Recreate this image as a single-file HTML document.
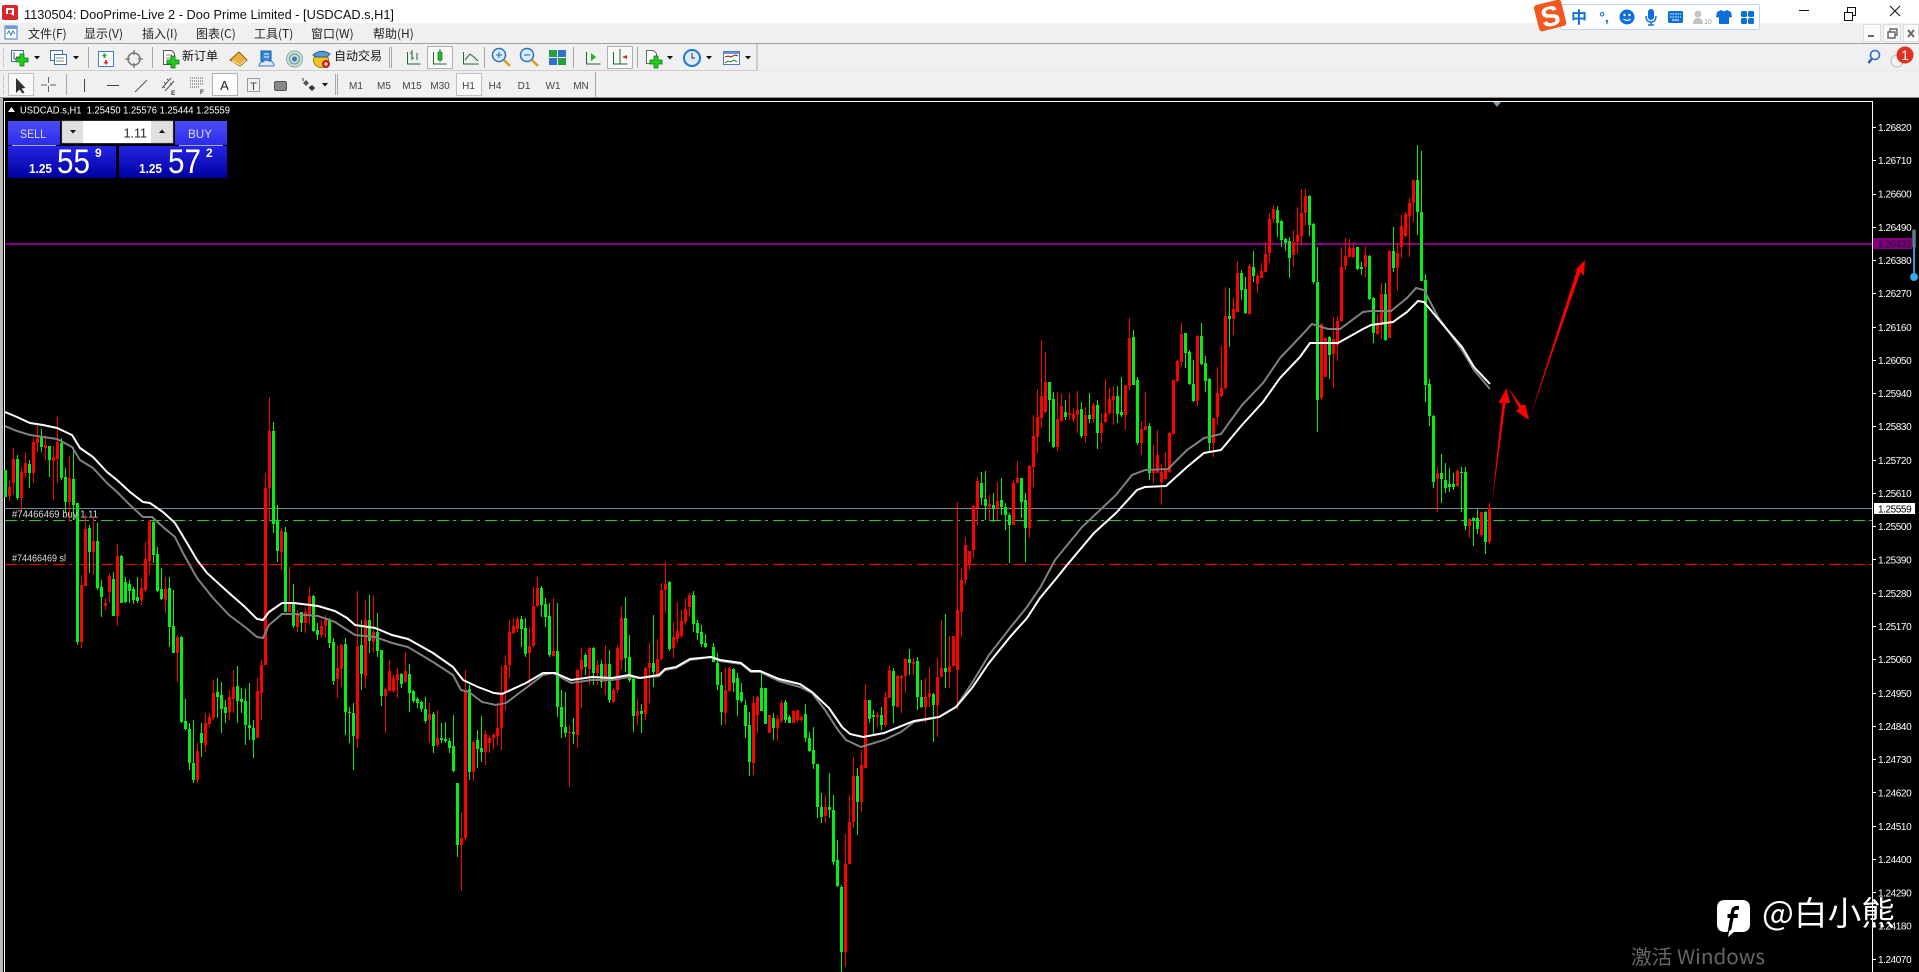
<!DOCTYPE html>
<html lang="zh"><head><meta charset="utf-8"><title>USDCAD.s,H1</title>
<style>
html,body{margin:0;padding:0;background:#000;width:1919px;height:972px;overflow:hidden}
svg{display:block}
text{font-family:"Liberation Sans","Noto Sans CJK SC",sans-serif;white-space:pre}
.c{font-family:"Noto Sans CJK SC","Liberation Sans",sans-serif}
.m{font-size:12px;fill:#222}
.tf{font-size:10px;fill:#444;text-anchor:middle}
.ax{font-size:10px;fill:#fff;letter-spacing:-.42px}
.w{fill:none;stroke-width:1;shape-rendering:crispEdges}
.b{fill:none;stroke-width:3;shape-rendering:crispEdges}
.g{stroke:#00f018}.r{stroke:#f00}
.sep{stroke:#a8a8a8;stroke-width:1;shape-rendering:crispEdges}
.blu{fill:#0d6fd8}
</style></head><body>
<svg xmlns="http://www.w3.org/2000/svg" width="1919" height="972" viewBox="0 0 1919 972">
<defs>
<linearGradient id="pb" x1="0" y1="0" x2="0" y2="1"><stop offset="0" stop-color="#2424e4"/><stop offset="1" stop-color="#0000a0"/></linearGradient>
<linearGradient id="bb" x1="0" y1="0" x2="0" y2="1"><stop offset="0" stop-color="#4c4cf8"/><stop offset="1" stop-color="#2c2cec"/></linearGradient>
<g id="plus"><path d="M-2-6H2V-2H6V2H2V6H-2V2H-6V-2H-2Z" fill="#22cc22" stroke="#0a7a0a" stroke-width=".8"/></g>
<path id="tri" d="M-3-2H3L0 1.5Z" fill="#111"/>
</defs>
<!-- chrome -->
<rect width="1919" height="23" fill="#fff"/>
<rect y="23" width="1919" height="75" fill="#f0f0f0"/>
<rect y="43" width="1919" height="1" fill="#a0a0a0"/>
<rect y="97" width="1919" height="1" fill="#909090"/>
<path d="M0 70.5H757V44" fill="none" stroke="#a8a8a8"/>
<path d="M0 70.5H1919" stroke="#e4e4e4" fill="none" opacity=".6"/>
<path d="M595.5 72V97" stroke="#a8a8a8"/>
<rect x="2" y="5" width="16" height="15" rx="2" fill="#d8262a"/><path d="M6 8h8v8l-3-2h-5z" fill="#fff"/><path d="M8 10h4v3l-4 1z" fill="#d8262a"/>
<text x="24" y="19" font-size="13" fill="#111" textLength="370" lengthAdjust="spacingAndGlyphs">1130504: DooPrime-Live 2 - Doo Prime Limited - [USDCAD.s,H1]</text>
<rect x="5" y="26" width="12" height="13" fill="#fff" stroke="#3a78c0"/><path d="M7 34l2-3 2 4 2-4 2 3" stroke="#3a78c0" fill="none"/><rect x="5" y="26" width="12" height="3" fill="#6ca0dc"/>
<g class="c m">
<text x="28" y="38" class="c m">文件(F)</text><text x="84" y="38" class="c m">显示(V)</text><text x="142" y="38" class="c m">插入(I)</text><text x="196" y="38" class="c m">图表(C)</text><text x="254" y="38" class="c m">工具(T)</text><text x="311" y="38" class="c m">窗口(W)</text><text x="373" y="38" class="c m">帮助(H)</text>
</g>
<!-- toolbar 1 -->
<path d="M3.5 48V68M3.5 75V95" stroke="#aaa" stroke-dasharray="1 1"/>
<rect x="11.5" y="50.5" width="12" height="11" fill="#fff" stroke="#3a70b8"/><path d="M14 52v7h7M16 57h4" stroke="#555" fill="none"/>
<use href="#plus" x="22" y="60"/><use href="#tri" x="37" y="58"/>
<rect x="50.5" y="50.5" width="12" height="10" fill="#fff" stroke="#3a70b8"/><rect x="54.5" y="54.5" width="12" height="10" fill="#fff" stroke="#3a70b8"/><path d="M56 58h8M56 61h8" stroke="#888"/><use href="#tri" x="76" y="58"/>
<path class="sep" d="M88.5 47V68"/>
<rect x="98.5" y="51.5" width="15" height="15" fill="#f8fbff" stroke="#4a7ac0"/><path d="M102 56l2.5-3 2.5 3h-1.5v2h-2v-2z" fill="#20b020"/><path d="M105 60h2v2h1.5l-2.5 3-2.5-3h1.5z" fill="#e03020"/>
<circle cx="134" cy="59" r="6" fill="none" stroke="#777" stroke-width="1.5"/><path d="M134 50v5M134 63v5M125 59h5M138 59h5" stroke="#777" stroke-width="1.3"/>
<path class="sep" d="M152.5 47V68"/>
<path d="M163.5 50.5h8l3 3v11h-11z" fill="#fff" stroke="#555"/><path d="M166 55h6M166 58h6" stroke="#888"/><use href="#plus" x="173" y="62"/>
<text x="182" y="60" font-size="12" class="c" fill="#111">新订单</text>
<path d="M230 60l9-8 8 8-7 6z" fill="#e8b040" stroke="#8a5a10"/><path d="M232 61l8 4 6-5" fill="none" stroke="#fbe8a0"/>
<rect x="261" y="51" width="10" height="10" fill="#2f8ade" stroke="#1a5aa0"/><path d="M264 54h5M264 57h5" stroke="#fff"/><path d="M259 66q0-4 4-4 2-3 6-1 5 0 5 5z" fill="#dcecf8" stroke="#4a7ac0"/>
<circle cx="294.5" cy="59" r="8" fill="#cfe0d8" stroke="#8aa8b0"/><circle cx="294.5" cy="59" r="5" fill="none" stroke="#5a9a8a"/><circle cx="294.5" cy="59" r="2.5" fill="#3a78b8"/>
<circle cx="321" cy="60" r="7.5" fill="#f2c420" stroke="#a07a10"/><path d="M313 55q8-7 17-1l-3 3h-11z" fill="#5a9ad8" stroke="#2a5a90"/><circle cx="326" cy="64" r="4" fill="#d01818"/><circle cx="326" cy="64" r="1.6" fill="#fff"/>
<text x="334" y="60" font-size="12" class="c" fill="#111">自动交易</text>
<path class="sep" d="M389.5 47V68M391.5 47V68"/>
<path d="M407.5 52v12h13M412 50v10M412 53h-2M412 58h2M417 53v7" stroke="#1c6a30" fill="none"/>
<rect x="427.5" y="46.5" width="25" height="22" fill="#f8f8f8" stroke="#b0b0b0"/><path d="M433.5 52v12h13M440 49v13" stroke="#1c6a30" fill="none"/><rect x="438" y="52" width="4" height="8" fill="#20c020" stroke="#0a5a10" stroke-width=".6"/>
<path d="M463.5 52v12h15M465 60l5-6 4 3 4 4" stroke="#1c6a30" fill="none"/>
<path class="sep" d="M484.5 47V68"/>
<circle cx="499" cy="55" r="6.5" fill="#d8ecfc" stroke="#2a70c0" stroke-width="1.5"/><path d="M496 55h6M499 52v6" stroke="#1a60b0"/><path d="M504 60l6 6" stroke="#d8a020" stroke-width="2.5"/>
<circle cx="527" cy="55" r="6.5" fill="#d8ecfc" stroke="#2a70c0" stroke-width="1.5"/><path d="M524 55h6" stroke="#1a60b0"/><path d="M532 60l6 6" stroke="#d8a020" stroke-width="2.5"/>
<rect x="549" y="50" width="8" height="7" fill="#20a040"/><rect x="558" y="50" width="8" height="7" fill="#3070c8"/><rect x="549" y="58" width="8" height="7" fill="#3070c8"/><rect x="558" y="58" width="8" height="7" fill="#20a040"/>
<path class="sep" d="M573.5 47V68"/>
<path d="M586.5 52v12h14" stroke="#1c6a30" fill="none"/><path d="M591 53l5 4-5 4z" fill="#20b020"/>
<rect x="607.5" y="46.5" width="25" height="22" fill="#f8f8f8" stroke="#b0b0b0"/><path d="M613.5 52v12h14M620 49v15" stroke="#1c6a30" fill="none"/><path d="M627 55l-5 2 5 2z" fill="#d03010"/>
<path class="sep" d="M637.5 47V68"/>
<path d="M646.5 50.5h7l3 3v10h-10z" fill="#fff" stroke="#666"/><use href="#plus" x="656" y="62"/><use href="#tri" x="670" y="58"/>
<circle cx="692" cy="58" r="8" fill="#dfeaf5" stroke="#1a78d8" stroke-width="2"/><path d="M692 53v5h3" stroke="#333" fill="none"/><use href="#tri" x="709" y="58"/>
<rect x="723.5" y="51.5" width="16" height="13" fill="#fff" stroke="#4a7ac0"/><rect x="724" y="52" width="15" height="2" fill="#6a96d0"/><path d="M725 57l3-1 3 1 4-2 3 1" stroke="#901010" fill="none"/><path d="M725 63l3-2 3 1 3-2 3 2" stroke="#108010" fill="none"/><use href="#tri" x="748" y="58"/>
<!-- toolbar 2 -->
<rect x="8.5" y="73.5" width="25" height="22" fill="#f8f8f8" stroke="#c0c0c0"/><path d="M16 78v15l3.5-3.5 3 4 2-1-3-4 4-.5z" fill="#303030"/>
<path d="M48.5 77v16M41 85h15" stroke="#666" stroke-dasharray="6 3"/>
<path class="sep" d="M66.5 74V95"/>
<path d="M84.5 79V92" stroke="#444"/><path d="M107 85.5h12" stroke="#444"/><path d="M135 92l12-12" stroke="#555"/>
<path d="M162 88l9-10M165 91l9-10M164 82l2 2M167 79l2 2M170 83l2 2M163 86l2 2" stroke="#555" fill="none"/><text x="171" y="95" font-size="6.5" fill="#333" font-weight="bold">E</text>
<path d="M190 78h13M190 81h13M190 84h13M190 87h9" stroke="#555" stroke-dasharray="1 1"/><text x="200" y="94" font-size="6.5" fill="#333" font-weight="bold">F</text>
<rect x="212.5" y="73.5" width="25" height="22" fill="#fdfdfd" stroke="#b0b0b0"/><text x="224.5" y="90" font-size="13" fill="#222" text-anchor="middle">A</text>
<rect x="247.5" y="78.5" width="12" height="13" fill="none" stroke="#444" stroke-dasharray="1 1"/><text x="253.5" y="90" font-size="11" fill="#444" text-anchor="middle">T</text>
<rect x="274.5" y="81.5" width="12" height="9" rx="1.5" fill="#888" stroke="#555"/>
<path d="M306 80l3 3-3 3-3-3z" fill="#555"/><path d="M312 85l3 3-3 3-3-3z" fill="#333"/><path d="M303 78v3M309 88l2-2" stroke="#333"/><use href="#tri" x="325" y="85"/>
<path class="sep" d="M335.5 74V95M337.5 74V95"/>
<rect x="456.5" y="73.5" width="25" height="22" fill="#f8f8f8" stroke="#c0c0c0"/>
<text x="356" y="89" class="tf">M1</text><text x="384" y="89" class="tf">M5</text><text x="412" y="89" class="tf">M15</text><text x="440" y="89" class="tf">M30</text><text x="468.5" y="89" class="tf">H1</text><text x="495" y="89" class="tf">H4</text><text x="524" y="89" class="tf">D1</text><text x="553" y="89" class="tf">W1</text><text x="581" y="89" class="tf">MN</text>
<!-- window controls -->
<path d="M1799 10.5h10" stroke="#111"/><path d="M1844.5 12.5h8v8h-8zM1847.5 12V7.500h8v8h-3" fill="none" stroke="#111"/><path d="M1890 6l10 10M1900 6l-10 10" stroke="#111"/>
<rect x="1863.500" y="24.500" width="17" height="17" fill="#fbfbfb" stroke="#ddd"/><rect x="1883.500" y="24.500" width="17" height="17" fill="#fbfbfb" stroke="#ddd"/><rect x="1903.500" y="24.500" width="15" height="17" fill="#fbfbfb" stroke="#ddd"/>
<path d="M1868 36h6" stroke="#666" stroke-width="2"/><path d="M1888 32h7v6h-7zM1890 32v-3h7v6h-2" fill="none" stroke="#666" stroke-width="1.4"/><path d="M1908 30l6 7M1914 30l-6 7" stroke="#666" stroke-width="2"/>
<circle cx="1875" cy="55" r="4.500" fill="none" stroke="#2a6fd0" stroke-width="1.600"/><path d="M1871.500 59l-3 4" stroke="#2a5fb0" stroke-width="2.400"/>
<circle cx="1897" cy="61" r="6" fill="#f4f4f4" stroke="#bbb"/>
<circle cx="1905" cy="55" r="8.500" fill="#e03020"/><text x="1905" y="60" font-size="14" fill="#fff" text-anchor="middle">1</text>
<!-- sogou -->
<rect x="1560.500" y="4.500" width="199" height="25" rx="2" fill="#fff" stroke="#c4d4ec"/>
<g transform="rotate(-14 1550 15)"><rect x="1536" y="2" width="28" height="27" rx="3" fill="#f05a20"/><text x="1550" y="26" font-size="28" font-weight="bold" fill="#fff" text-anchor="middle">S</text></g>
<text x="1579" y="23" font-size="16" font-weight="bold" class="c blu" text-anchor="middle">中</text>
<text x="1604" y="22" font-size="14" font-weight="bold" class="blu" text-anchor="middle">°,</text>
<circle cx="1627" cy="17" r="7.500" class="blu"/><circle cx="1624.500" cy="15" r="1.200" fill="#fff"/><circle cx="1629.500" cy="15" r="1.200" fill="#fff"/><path d="M1623.500 19q3.500 3 7 0" stroke="#fff" fill="none" stroke-width="1.200"/>
<rect x="1648" y="9" width="6" height="11" rx="3" class="blu"/><path d="M1646 16q0 6 5 6t5-6M1651 22v3M1648 25h6" stroke="#0d6fd8" fill="none" stroke-width="1.400"/>
<rect x="1668" y="11" width="15" height="12" rx="1.500" class="blu"/><path d="M1670 14h11M1670 17h11" stroke="#fff" stroke-dasharray="1.500 1"/><path d="M1672 20h7" stroke="#fff"/>
<circle cx="1698" cy="14" r="3.500" fill="#c4c4c4"/><path d="M1693 24q0-6 5-6t5 6z" fill="#c4c4c4"/><text x="1704" y="24" font-size="7" fill="#999">10</text>
<path d="M1717 12l4-2 3 1.500 3-1.500 4 2 1 5-3 .5V24h-10v-6.500l-3-.5z" class="blu"/>
<rect x="1741" y="11" width="6" height="6" rx="1.500" class="blu"/><rect x="1748" y="11" width="6" height="6" rx="1.500" class="blu"/><rect x="1741" y="18" width="6" height="6" rx="1.500" class="blu"/><rect x="1748" y="18" width="6" height="6" rx="1.500" class="blu"/>
<!-- frame -->
<rect y="98" width="1919" height="874" fill="#000"/>
<rect y="98" width="3" height="874" fill="#b8b8b8"/>
<rect x="4" y="101" width="1" height="871" fill="#fff"/>
<rect x="4" y="101" width="1869" height="1" fill="#fff"/>
<rect x="1872" y="101" width="1" height="871" fill="#fff"/>
<path d="M1493 102h8l-4 5z" fill="#8899aa"/>
<!-- levels -->
<rect x="5" y="243" width="1867" height="2" fill="#800080"/>
<rect x="5" y="508" width="1867" height="1" fill="#778899"/>
<path d="M5 520.500H1872" stroke="#22cc22" stroke-dasharray="12 4 3 5"/>
<path d="M5 564.500H1872" stroke="#f00" stroke-dasharray="12 4 3 5"/>
<!-- candles: green -->
<g class="g">
<path class="w" d="M5.500 470V497M17.500 455V500M29.500 460V488M41.500 429V452M49.500 446V477M61.500 438V480M65.500 468V512M73.500 447V520M77.500 503V645M89.500 525V573M97.500 523V590M101.500 580V617M113.500 572V616M121.500 555V603M125.500 577V603M129.500 580V603M133.500 587V604M137.500 577V603M153.500 520V563M157.500 547V592M161.500 568V600M169.500 577V647M173.500 590V653M181.500 636V723M185.500 699V730M189.500 723V770M193.500 720V783M201.500 723V757M217.500 678V718M221.500 682V733M225.500 700V723M237.500 666V723M241.500 688V713M245.500 689V745M249.500 683V740M253.500 720V758M273.500 422V533M277.500 505V562M285.500 527V612M293.500 584V628M301.500 612V632M313.500 595V632M317.500 623V640M329.500 618V648M333.500 638V685M345.500 638V735M349.500 707V743M353.500 703V770M361.500 620V690M369.500 595V653M377.500 613V657M381.500 650V706M401.500 673V688M409.500 664V712M413.500 690V703M417.500 697V708M421.500 701V712M425.500 697V723M433.500 712V753M441.500 723V743M445.500 722V743M449.500 738V753M453.500 715V772M457.500 783V857M469.500 685V780M477.500 730V768M481.500 716V762M521.500 616V647M525.500 618V657M541.500 586V617M545.500 598V627M549.500 603V657M557.500 603V717M561.500 690V738M565.500 692V737M573.500 718V744M585.500 653V675M593.500 647V685M601.500 660V688M609.500 650V703M625.500 597V672M629.500 635V682M633.500 678V732M641.500 704V733M653.500 615V687M669.500 581V651M693.500 591V632M697.500 620V640M701.500 625V647M705.500 634V648M713.500 643V662M717.500 653V690M721.500 672V725M733.500 668V692M737.500 673V716M741.500 683V703M745.500 700V738M749.500 712V776M761.500 672V711M765.500 688V724M773.500 713V740M785.500 700V723M789.500 715V723M805.500 704V742M809.500 732V752M813.500 727V769M817.500 764V818M821.500 793V823M829.500 773V818M833.500 795V865M837.500 840V887M841.500 885V972M857.500 768V835M869.500 700V723M873.500 710V735M881.500 707V730M893.500 668V723M909.500 649V675M917.500 657V710M921.500 680V708M933.500 693V742M945.500 614V688M981.500 472V505M985.500 471V520M993.500 493V522M1001.500 478V515M1005.500 503V530M1009.500 513V563M1021.500 478V518M1025.500 493V562M1049.500 382V442M1053.500 392V448M1065.500 400V420M1081.500 402V438M1089.500 393V423M1097.500 400V449M1117.500 386V423M1121.500 377V417M1133.500 330V385M1137.500 377V445M1149.500 423V480M1185.500 333V368M1189.500 350V385M1193.500 360V402M1201.500 323V365M1205.500 356V392M1209.500 378V452M1229.500 288V347M1241.500 270V300M1245.500 277V314M1253.500 251V282M1277.500 206V237M1281.500 220V247M1285.500 238V251M1289.500 237V278M1309.500 195V236M1313.500 223V284M1317.500 247V432M1329.500 336V379M1357.500 247V270M1361.500 262V275M1369.500 255V300M1373.500 297V343M1385.500 283V341M1393.500 227V272M1417.500 145V235M1421.500 151V281M1425.500 274V402M1429.500 379V426M1433.500 415V488M1441.500 454V503M1445.500 463V493M1449.500 468V492M1453.500 473V490M1461.500 467V512M1465.500 467V530M1473.500 517V546M1477.500 509V534M1485.500 511V554"/>
<path class="b" d="M5.500 470V497M17.500 459V498M29.500 464V473M41.500 437V447M49.500 446V460M61.500 443V478M65.500 477V502M73.500 479V505M77.500 503V642M89.500 528V552M97.500 541V588M101.500 587V597M113.500 579V616M121.500 556V603M125.500 582V602M129.500 584V591M133.500 589V600M137.500 597V601M153.500 522V555M157.500 554V591M161.500 589V599M169.500 588V627M173.500 626V653M181.500 637V722M185.500 721V729M189.500 729V763M193.500 763V780M201.500 733V743M217.500 692V697M221.500 695V709M225.500 707V713M237.500 686V701M241.500 699V702M245.500 701V725M249.500 725V728M253.500 728V740M273.500 431V524M277.500 521V551M285.500 532V612M293.500 603V626M301.500 612V623M313.500 596V631M317.500 630V635M329.500 620V643M333.500 642V681M345.500 644V712M349.500 712V713M353.500 713V736M361.500 645V674M369.500 620V641M377.500 632V651M381.500 650V696M401.500 674V684M409.500 674V693M413.500 691V701M417.500 699V703M421.500 702V709M425.500 709V721M433.500 714V746M441.500 738V740M445.500 739V741M449.500 741V748M453.500 746V771M457.500 783V845M469.500 689V772M477.500 740V749M481.500 748V752M521.500 619V629M525.500 628V654M541.500 588V605M545.500 604V617M549.500 616V655M557.500 651V707M561.500 707V727M565.500 727V733M573.500 732V734M585.500 655V667M593.500 648V673M601.500 664V682M609.500 664V700M625.500 618V658M629.500 657V680M633.500 679V716M641.500 711V714M653.500 663V672M669.500 582V649M693.500 595V624M697.500 623V633M701.500 632V644M705.500 643V647M713.500 647V662M717.500 663V685M721.500 685V712M733.500 669V683M737.500 678V700M741.500 692V701M745.500 705V726M749.500 725V762M761.500 688V711M765.500 688V724M773.500 718V728M785.500 702V720M789.500 717V723M805.500 714V738M809.500 738V751M813.500 750V764M817.500 764V807M821.500 807V817M829.500 807V810M833.500 810V862M837.500 860V886M841.500 887V952M857.500 776V802M869.500 700V719M873.500 715V717M881.500 715V725M893.500 671V706M909.500 659V663M917.500 661V697M921.500 697V707M933.500 694V705M945.500 668V672M981.500 483V498M985.500 499V506M993.500 505V508M1001.500 500V507M1005.500 507V515M1009.500 515V525M1021.500 478V502M1025.500 500V528M1049.500 382V400M1053.500 399V447M1065.500 412V417M1081.500 409V436M1089.500 415V419M1097.500 405V433M1117.500 396V414M1121.500 412V415M1133.500 337V385M1137.500 380V443M1149.500 426V473M1185.500 333V353M1189.500 352V384M1193.500 384V401M1201.500 336V364M1205.500 363V381M1209.500 379V443M1229.500 316V319M1241.500 273V290M1245.500 289V313M1253.500 267V276M1277.500 210V223M1281.500 221V240M1285.500 239V243M1289.500 241V258M1309.500 196V225M1313.500 224V282M1317.500 282V400M1329.500 337V355M1357.500 247V269M1361.500 267V269M1369.500 256V299M1373.500 298V333M1385.500 294V340M1393.500 251V268M1417.500 180V212M1421.500 212V281M1425.500 280V385M1429.500 384V416M1433.500 416V482M1441.500 473V479M1445.500 480V488M1449.500 484V487M1453.500 484V487M1461.500 472V473M1465.500 472V526M1473.500 518V520M1477.500 518V529M1485.500 512V542"/>
</g>
<!-- candles: red -->
<g class="r">
<path class="w" d="M9.500 480V501M13.500 448V495M21.500 467V512M25.500 452V478M33.500 438V483M37.500 423V452M45.500 435V460M53.500 446V500M57.500 417V483M69.500 456V522M81.500 575V648M85.500 515V586M93.500 517V575M105.500 598V610M109.500 573V602M117.500 544V626M141.500 578V605M145.500 542V592M149.500 520V575M165.500 577V613M177.500 635V682M197.500 743V783M205.500 713V752M209.500 713V727M213.500 680V720M229.500 690V720M233.500 670V713M257.500 678V738M261.500 660V720M265.500 473V665M269.500 397V522M281.500 528V570M289.500 567V612M297.500 610V632M305.500 607V633M309.500 587V625M321.500 620V638M325.500 615V638M337.500 645V698M341.500 644V687M357.500 591V748M365.500 600V688M373.500 596V652M385.500 687V733M389.500 660V691M393.500 675V693M397.500 668V698M405.500 652V683M429.500 703V743M437.500 710V747M461.500 812V891M465.500 670V841M473.500 740V781M485.500 730V765M489.500 735V753M493.500 733V749M497.500 703V745M501.500 666V750M505.500 655V710M509.500 620V678M513.500 618V634M517.500 617V632M529.500 627V685M533.500 587V647M537.500 577V607M553.500 598V657M569.500 725V787M577.500 669V748M581.500 648V708M589.500 647V685M597.500 660V685M605.500 645V695M613.500 688V703M617.500 645V693M621.500 606V670M637.500 699V725M645.500 667V720M649.500 643V703M657.500 639V678M661.500 583V660M665.500 562V613M673.500 622V658M677.500 602V643M681.500 610V638M685.500 598V625M689.500 593V617M725.500 668V724M729.500 667V692M753.500 696V775M757.500 696V733M769.500 715V733M777.500 715V741M781.500 700V723M793.500 710V723M797.500 710V722M801.500 715V722M825.500 795V823M845.500 834V967M849.500 795V864M853.500 757V828M861.500 750V812M865.500 684V768M877.500 712V727M885.500 692V727M889.500 666V698M897.500 675V707M901.500 675V713M905.500 658V693M913.500 658V675M925.500 678V723M929.500 667V707M937.500 658V737M941.500 620V677M949.500 636V688M953.500 636V667M957.500 502V710M961.500 568V637M965.500 537V585M969.500 551V570M973.500 505V558M977.500 477V525M989.500 495V520M997.500 482V520M1013.500 480V525M1017.500 461V483M1029.500 465V538M1033.500 415V487M1037.500 389V453M1041.500 340V428M1045.500 352V413M1057.500 392V451M1061.500 394V422M1069.500 393V420M1073.500 408V422M1077.500 391V433M1085.500 407V443M1093.500 403V423M1101.500 413V443M1105.500 379V423M1109.500 388V415M1113.500 386V425M1125.500 385V430M1129.500 318V390M1141.500 421V455M1145.500 392V430M1153.500 445V483M1157.500 430V473M1161.500 464V505M1165.500 452V480M1169.500 432V473M1173.500 380V435M1177.500 360V382M1181.500 323V367M1197.500 335V406M1213.500 418V457M1217.500 367V425M1221.500 346V397M1225.500 287V390M1233.500 298V335M1237.500 261V312M1249.500 264V315M1257.500 273V293M1261.500 263V278M1265.500 242V272M1269.500 213V263M1273.500 205V223M1293.500 230V267M1297.500 207V254M1301.500 189V246M1305.500 189V226M1321.500 323V400M1325.500 337V377M1333.500 317V388M1337.500 316V361M1341.500 247V322M1345.500 238V270M1349.500 239V257M1353.500 242V258M1365.500 246V277M1377.500 314V335M1381.500 283V339M1389.500 250V338M1397.500 243V291M1401.500 215V258M1405.500 212V237M1409.500 198V257M1413.500 180V222M1437.500 467V512M1457.500 469V487M1469.500 518V538M1481.500 512V537M1489.500 503V544"/>
<path class="b" d="M9.500 487V496M13.500 459V483M21.500 472V498M25.500 463V473M33.500 442V473M37.500 438V443M45.500 445V448M53.500 457V461M57.500 442V459M69.500 478V502M81.500 585V642M85.500 529V586M93.500 541V552M105.500 603V606M109.500 576V592M117.500 556V616M141.500 588V600M145.500 559V590M149.500 521V561M165.500 589V600M177.500 637V653M197.500 751V780M205.500 723V745M209.500 717V724M213.500 693V718M229.500 697V712M233.500 687V699M257.500 691V738M261.500 665V693M265.500 488V665M269.500 431V488M281.500 531V552M289.500 604V612M297.500 613V627M305.500 612V623M309.500 596V615M321.500 626V635M325.500 620V626M337.500 668V679M341.500 645V669M357.500 646V739M365.500 620V676M373.500 632V642M385.500 689V696M389.500 671V691M393.500 678V691M397.500 674V680M405.500 671V682M429.500 714V720M437.500 738V745M461.500 838V845M465.500 690V838M473.500 742V772M485.500 734V752M489.500 738V743M493.500 735V738M497.500 728V736M501.500 692V728M505.500 665V692M509.500 632V665M513.500 626V633M517.500 619V629M529.500 646V653M533.500 606V646M537.500 588V606M553.500 651V656M569.500 732V733M577.500 670V735M581.500 660V670M589.500 648V669M597.500 665V673M605.500 664V682M613.500 690V702M617.500 648V690M621.500 618V660M637.500 711V716M645.500 668V714M649.500 663V668M657.500 659V677M661.500 590V659M665.500 584V590M673.500 637V648M677.500 631V639M681.500 621V636M685.500 609V622M689.500 595V607M725.500 690V713M729.500 668V691M753.500 703V763M757.500 697V715M769.500 715V733M777.500 719V728M781.500 703V721M793.500 711V723M797.500 710V720M801.500 717V720M825.500 807V816M845.500 864V952M849.500 822V864M853.500 776V822M861.500 765V802M865.500 700V768M877.500 715V717M885.500 697V725M889.500 670V698M897.500 676V707M901.500 676V678M905.500 659V676M913.500 662V664M925.500 697V707M929.500 693V697M937.500 677V705M941.500 668V677M949.500 666V672M953.500 636V666M957.500 610V670M961.500 580V612M965.500 545V580M969.500 551V564M973.500 506V550M977.500 481V508M989.500 504V507M997.500 501V508M1013.500 483V525M1017.500 478V483M1029.500 466V528M1033.500 436V467M1037.500 417V437M1041.500 396V418M1045.500 382V412M1057.500 419V447M1061.500 406V421M1069.500 413V415M1073.500 414V419M1077.500 410V415M1085.500 415V436M1093.500 405V419M1101.500 423V433M1105.500 413V422M1109.500 399V413M1113.500 396V400M1125.500 385V415M1129.500 338V386M1141.500 429V443M1145.500 426V430M1153.500 469V473M1157.500 455V473M1161.500 472V482M1165.500 470V479M1169.500 433V472M1173.500 380V434M1177.500 361V381M1181.500 334V362M1197.500 336V401M1213.500 418V443M1217.500 393V417M1221.500 388V396M1225.500 316V388M1233.500 309V319M1237.500 273V312M1249.500 266V314M1257.500 276V284M1261.500 271V278M1265.500 254V272M1269.500 219V253M1273.500 209V219M1293.500 242V255M1297.500 235V242M1301.500 213V236M1305.500 196V213M1321.500 324V398M1325.500 338V377M1333.500 339V354M1337.500 321V345M1341.500 267V321M1345.500 256V266M1349.500 248V257M1353.500 248V257M1365.500 255V267M1377.500 324V334M1381.500 294V325M1389.500 251V338M1397.500 253V268M1401.500 226V247M1405.500 214V236M1409.500 203V216M1413.500 180V203M1437.500 473V479M1457.500 471V486M1469.500 519V526M1481.500 512V535M1489.500 508V542"/>
</g>
<!-- moving averages -->
<polyline fill="none" stroke="#808080" stroke-width="2" points="5,426 17,431 30,435 43,437 57,439 72,447 80,460 93,468 107,483 117,492 130,505 143,517 152,517 163,527 175,537 183,553 197,578 213,598 229,615 245,627 257,637 263,638 269,625 282,614 294,614 318,616 335,622 355,635 375,637 392,643 408,647 433,662 453,675 461,690 469,692 482,702 496,705 506,703 526,688 543,675 553,673 571,683 592,680 612,680 629,677 640,678 659,676 665,670 676,668 690,660 711,657 720,661 741,664 751,672 760,672 779,681 800,687 812,693 825,710 838,730 846,740 861,747 884,740 901,732 914,722 939,717 956,707 972,683 989,655 1010,628 1027,607 1040,588 1055,560 1082,527 1116,495 1132,475 1145,470 1168,469 1187,450 1204,438 1221,434 1242,405 1263,383 1280,358 1300,337 1312,324 1328,329 1340,329 1363,312 1371,311 1391,311 1407,298 1416,288 1424,290 1438,317 1462,350 1474,370 1490,389"/>
<polyline fill="none" stroke="#fff" stroke-width="2" points="5,412 17,417 30,423 43,425 57,428 72,435 80,448 93,457 107,472 117,480 130,492 143,502 150,503 163,512 175,523 187,543 197,560 207,573 229,593 245,607 257,619 263,620 269,612 282,603 294,603 318,606 335,611 347,618 355,625 375,628 392,635 408,639 433,653 453,667 463,680 478,687 494,693 502,694 526,683 543,673 555,673 571,680 592,677 612,678 629,675 640,678 659,675 665,669 676,667 690,659 711,657 720,660 741,663 751,671 760,671 779,679 800,684 812,692 829,708 842,727 850,734 863,737 884,733 914,721 939,717 956,707 972,688 989,663 1010,637 1027,618 1040,598 1055,580 1067,565 1094,533 1116,513 1137,490 1145,487 1166,486 1187,467 1204,453 1221,450 1242,425 1263,402 1280,378 1300,357 1310,343 1338,343 1363,329 1371,325 1393,322 1407,312 1418,301 1424,302 1434,314 1450,333 1462,347 1474,367 1490,384"/>
<!-- arrows -->
<g fill="#f00"><polygon points="1491.500,507 1502.500,403 1498.500,403 1506.500,388 1510,403 1505.500,403"/><polygon points="1508.500,388 1521,405 1525.500,405 1529,420 1516,411 1519,408"/><polygon points="1529,420 1577,270 1573.500,272 1585,260 1584,276 1580.500,272"/></g>
<!-- labels -->
<path d="M8 112l3.500-5 3.500 5z" fill="#fff"/>
<text x="20" y="113.500" font-size="10" fill="#fff" textLength="210" lengthAdjust="spacingAndGlyphs">USDCAD.s,H1  1.25450 1.25576 1.25444 1.25559</text>
<text x="12" y="517.500" font-size="10" fill="#ddd" textLength="86" lengthAdjust="spacingAndGlyphs">#74466469 buy 1.11</text>
<text x="12" y="561.500" font-size="10" fill="#ddd" textLength="54" lengthAdjust="spacingAndGlyphs">#74466469 sl</text>
<!-- trade panel -->
<rect x="8" y="121" width="52" height="24" fill="url(#bb)"/><rect x="12" y="145" width="44" height="1" fill="#aab"/>
<text x="33" y="138" font-size="12" fill="#dde" text-anchor="middle" textLength="26" lengthAdjust="spacingAndGlyphs">SELL</text>
<rect x="175" y="121" width="52" height="24" fill="url(#bb)"/><rect x="179" y="145" width="44" height="1" fill="#aab"/>
<text x="200" y="138" font-size="12" fill="#dde" text-anchor="middle" textLength="24" lengthAdjust="spacingAndGlyphs">BUY</text>
<rect x="62" y="121" width="111" height="22" fill="#e0e0e0" stroke="#aaa" stroke-width=".5"/><rect x="83" y="121" width="68" height="22" fill="#fff"/>
<path d="M70 130h6l-3 3.500z" fill="#111"/><path d="M159 133h6l-3-3.500z" fill="#111"/>
<text x="147" y="137.500" font-size="12.500" fill="#222" text-anchor="end">1.11</text>
<rect x="8" y="146" width="108" height="32" fill="url(#pb)"/><rect x="119" y="146" width="108" height="32" fill="url(#pb)"/>
<text x="29" y="173" font-size="13" font-weight="bold" fill="#fff" textLength="23" lengthAdjust="spacingAndGlyphs">1.25</text>
<text x="57" y="173" font-size="34" fill="#fff" textLength="33" lengthAdjust="spacingAndGlyphs">55</text>
<text x="95" y="157" font-size="12" font-weight="bold" fill="#fff">9</text>
<text x="139" y="173" font-size="13" font-weight="bold" fill="#fff" textLength="23" lengthAdjust="spacingAndGlyphs">1.25</text>
<text x="168" y="173" font-size="34" fill="#fff" textLength="33" lengthAdjust="spacingAndGlyphs">57</text>
<text x="206" y="157" font-size="12" font-weight="bold" fill="#fff">2</text>
<!-- axis -->
<path stroke="#fff" d="M1873 127.500h3M1873 160.500h3M1873 194.500h3M1873 227.500h3M1873 260.500h3M1873 293.500h3M1873 327.500h3M1873 360.500h3M1873 393.500h3M1873 426.500h3M1873 460.500h3M1873 493.500h3M1873 526.500h3M1873 559.500h3M1873 593.500h3M1873 626.500h3M1873 659.500h3M1873 693.500h3M1873 726.500h3M1873 759.500h3M1873 792.500h3M1873 826.500h3M1873 859.500h3M1873 892.500h3M1873 926.500h3M1873 959.500h3"/>
<g class="ax">
<text class="ax" x="1878" y="131">1.26820</text><text class="ax" x="1878" y="164">1.26710</text><text class="ax" x="1878" y="197.500">1.26600</text><text class="ax" x="1878" y="231">1.26490</text><text class="ax" x="1878" y="264">1.26380</text><text class="ax" x="1878" y="297">1.26270</text><text class="ax" x="1878" y="331">1.26160</text><text class="ax" x="1878" y="364">1.26050</text><text class="ax" x="1878" y="397">1.25940</text><text class="ax" x="1878" y="430">1.25830</text><text class="ax" x="1878" y="464">1.25720</text><text class="ax" x="1878" y="497">1.25610</text><text class="ax" x="1878" y="530">1.25500</text><text class="ax" x="1878" y="563.500">1.25390</text><text class="ax" x="1878" y="597">1.25280</text><text class="ax" x="1878" y="630">1.25170</text><text class="ax" x="1878" y="663">1.25060</text><text class="ax" x="1878" y="697">1.24950</text><text class="ax" x="1878" y="730">1.24840</text><text class="ax" x="1878" y="763">1.24730</text><text class="ax" x="1878" y="796.500">1.24620</text><text class="ax" x="1878" y="830">1.24510</text><text class="ax" x="1878" y="863">1.24400</text><text class="ax" x="1878" y="896.500">1.24290</text><text class="ax" x="1878" y="929.500">1.24180</text><text class="ax" x="1878" y="963">1.24070</text>
</g>
<rect x="1873" y="238" width="39" height="11" fill="#800080"/><text x="1878" y="247.500" class="ax" style="fill:#2a102a">1.26432</text>
<rect x="1874" y="503" width="41" height="11" fill="#fff"/><text x="1878" y="512.500" class="ax" style="fill:#000">1.25559</text>
<path d="M1914 231V246" stroke="#667788" stroke-width="3.500" stroke-linecap="round"/><path d="M1914 246V277" stroke="#2a9ad8" stroke-width="2"/><circle cx="1914" cy="277" r="4" fill="#3aa8e0"/>
<!-- watermark -->
<path d="M1725 900h17q8 0 8 8v16q0 8-8 8h-8l-6 5 1-5h-4q-8 0-8-8v-16q0-8 8-8z" fill="#fff"/>
<path d="M1739 906q-7-1-8 5l-.5 3h-3v4h2.500l-2.500 15 4-4 2-11h4l.5-4h-4l.3-2q.5-3 4.500-2z" fill="#000"/>
<text x="1762" y="925" font-size="33" fill="#fff" class="c" textLength="133" lengthAdjust="spacingAndGlyphs">@白小熊</text>
<text x="1631" y="964" font-size="20" fill="#666" class="c" textLength="134" lengthAdjust="spacingAndGlyphs">激活 Windows</text>
</svg>
</body></html>
